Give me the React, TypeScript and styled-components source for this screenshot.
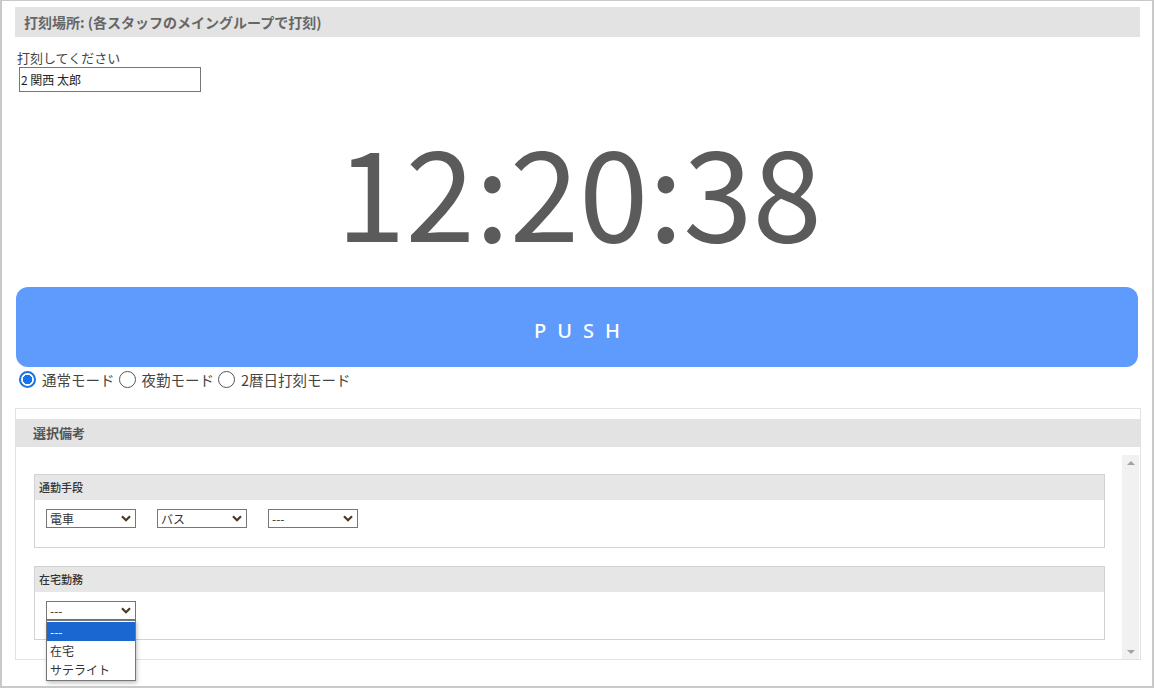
import styled, { createGlobalStyle } from "styled-components"

const GlobalStyle = createGlobalStyle`
  html, body {
    margin: 0;
    padding: 0;
    background: #ffffff;
  }
  body {
    font-family: "Noto Sans CJK JP", "Noto Sans", sans-serif;
    color: #444;
  }
  * {
    box-sizing: border-box;
  }
`

interface Mode {
  label: string
  checked: boolean
}

const MODES: Mode[] = [
  { label: "通常モード", checked: true },
  { label: "夜勤モード", checked: false },
  { label: "2暦日打刻モード", checked: false },
]

interface Group {
  title: string
  selects: string[]
  open?: string[]
}

const GROUPS: Group[] = [
  { title: "通勤手段", selects: ["電車", "バス", "---"] },
  { title: "在宅勤務", selects: ["---"], open: ["---", "在宅", "サテライト"] },
]

function Chevron() {
  return (
    <svg width='10' height='7' viewBox='0 0 10 7'>
      <path d='M1 1.2 L5 5.2 L9 1.2' fill='none' stroke='#4a3b1e' strokeWidth='2.2' />
    </svg>
  )
}

function FakeSelect({ value, options }: { value: string; options?: string[] }) {
  return (
    <SelectBox>
      <SelectValue>{value}</SelectValue>
      <Chevron />
      {options && (
        <OptionList>
          {options.map((opt, i) => (
            <Option key={opt} $active={i === 0}>
              {opt}
            </Option>
          ))}
        </OptionList>
      )}
    </SelectBox>
  )
}

export default function App() {
  return (
    <>
      <GlobalStyle />
      <Frame>
        <TitleBar>打刻場所: (各スタッフのメイングループで打刻)</TitleBar>
        <FieldLabel>打刻してください</FieldLabel>
        <NameInput value='2 関西 太郎' readOnly />
        <Clock>12:20:38</Clock>
        <PushButton>PUSH</PushButton>
        <RadioRow>
          {MODES.map((m) => (
            <RadioItem key={m.label}>
              <RadioDot $checked={m.checked} />
              {m.label}
            </RadioItem>
          ))}
        </RadioRow>
        <Section>
          <SectionHeader>選択備考</SectionHeader>
          <ScrollArea>
            <ScrollContent>
              {GROUPS.map((g) => (
                <GroupBox key={g.title}>
                  <GroupHeader>{g.title}</GroupHeader>
                  <GroupBody>
                    {g.selects.map((s, i) => (
                      <FakeSelect key={i} value={s} options={g.open} />
                    ))}
                  </GroupBody>
                </GroupBox>
              ))}
            </ScrollContent>
            <ScrollBar>
              <Arrow $dir='up' />
              <Arrow $dir='down' />
            </ScrollBar>
          </ScrollArea>
        </Section>
      </Frame>
    </>
  )
}

const Frame = styled.div`
  width: 1154px;
  height: 688px;
  border: 2px solid #c9c9c9;
  border-top-width: 1px;
  padding: 6px 12px 0 13px;
  display: flex;
  flex-direction: column;
  overflow: hidden;
`

const TitleBar = styled.div`
  height: 30px;
  width: 1125px;
  background: #e3e3e3;
  color: #666;
  font-size: 14px;
  font-weight: 700;
  line-height: 30px;
  padding-left: 9px;
`

const FieldLabel = styled.div`
  margin-top: 12px;
  margin-left: 2px;
  font-size: 13px;
  line-height: 18px;
  color: #444;
`

const NameInput = styled.input`
  margin-left: 4px;
  width: 182px;
  height: 25px;
  border: 1px solid #767676;
  padding: 0 1px;
  font-family: "Noto Sans CJK JP", sans-serif;
  font-size: 12px;
  color: #222;
  outline: none;
`

const Clock = styled.div`
  margin-top: 18px;
  height: 177px;
  text-align: center;
  font-size: 125px;
  line-height: 156px;
  color: #5b5b5b;
  padding-left: 3px;
`

const PushButton = styled.div`
  margin-left: 1px;
  width: 1122px;
  height: 80px;
  border-radius: 12px;
  background: #5e9bfc;
  color: #fff;
  font-family: "Noto Sans", sans-serif;
  font-size: 20px;
  font-weight: 500;
  letter-spacing: 11px;
  text-indent: 11px;
  padding-top: 6px;
  display: flex;
  align-items: center;
  justify-content: center;
`

const RadioRow = styled.div`
  display: flex;
  gap: 4px;
  margin-top: 1px;
  margin-left: 4px;
  height: 22px;
  align-items: center;
`

const RadioItem = styled.label`
  display: flex;
  align-items: center;
  gap: 6px;
  font-size: 14.5px;
  color: #444;
`

const RadioDot = styled.span<{ $checked: boolean }>`
  width: 17px;
  height: 17px;
  border-radius: 50%;
  border: ${(p) => (p.$checked ? "2px solid #1a73e8" : "1px solid #555")};
  background: ${(p) =>
    p.$checked ? "radial-gradient(circle, #1a73e8 0 4.5px, #fff 5px)" : "#fff"};
`

const Section = styled.div`
  margin-top: 18px;
  width: 1126px;
  height: 252px;
  border: 1px solid #e2e2e2;
  display: flex;
  flex-direction: column;
`

const SectionHeader = styled.div`
  margin-top: 10px;
  height: 28px;
  background: #e3e3e3;
  color: #555;
  font-size: 13px;
  font-weight: 700;
  line-height: 28px;
  padding-left: 17px;
`

const ScrollArea = styled.div`
  margin-top: 8px;
  flex: 1;
  display: flex;
  padding-right: 1px;
`

const ScrollContent = styled.div`
  flex: 1;
  padding: 19px 17px 0 18px;
  display: flex;
  flex-direction: column;
  gap: 18px;
`

const GroupBox = styled.div`
  height: 74px;
  border: 1px solid #d2d2d2;
  display: flex;
  flex-direction: column;
`

const GroupHeader = styled.div`
  height: 25px;
  background: #e6e6e6;
  font-size: 11px;
  font-weight: 500;
  color: #333;
  line-height: 25px;
  padding-left: 4px;
`

const GroupBody = styled.div`
  display: flex;
  gap: 21px;
  padding: 9px 0 0 11px;
`

const SelectBox = styled.div`
  position: relative;
  width: 90px;
  height: 19px;
  border: 1px solid #767676;
  background: #fff;
  display: flex;
  align-items: center;
  justify-content: space-between;
  padding: 0 4px 0 3px;
  font-size: 12px;
  color: #333;
`

const SelectValue = styled.span`
  line-height: 17px;
`

const OptionList = styled.div`
  position: absolute;
  top: 18px;
  left: -1px;
  width: 90px;
  border: 1px solid #767676;
  background: #fff;
  box-shadow: 1px 2px 4px rgba(0, 0, 0, 0.25);
  padding: 1px 0 1px;
  z-index: 5;
`

const Option = styled.div<{ $active: boolean }>`
  height: 19px;
  line-height: 19px;
  padding-left: 3px;
  font-size: 12px;
  background: ${(p) => (p.$active ? "#1a67d2" : "#fff")};
  color: ${(p) => (p.$active ? "#fff" : "#333")};
`

const ScrollBar = styled.div`
  width: 17px;
  background: #f1f1f1;
  display: flex;
  flex-direction: column;
  justify-content: space-between;
  align-items: center;
  padding: 6px 0 5px;
`

const Arrow = styled.span<{ $dir: "up" | "down" }>`
  width: 0;
  height: 0;
  border-left: 4px solid transparent;
  border-right: 4px solid transparent;
  ${(p) =>
    p.$dir === "up"
      ? "border-bottom: 4px solid #a3a3a3;"
      : "border-top: 4px solid #a3a3a3;"}
`
